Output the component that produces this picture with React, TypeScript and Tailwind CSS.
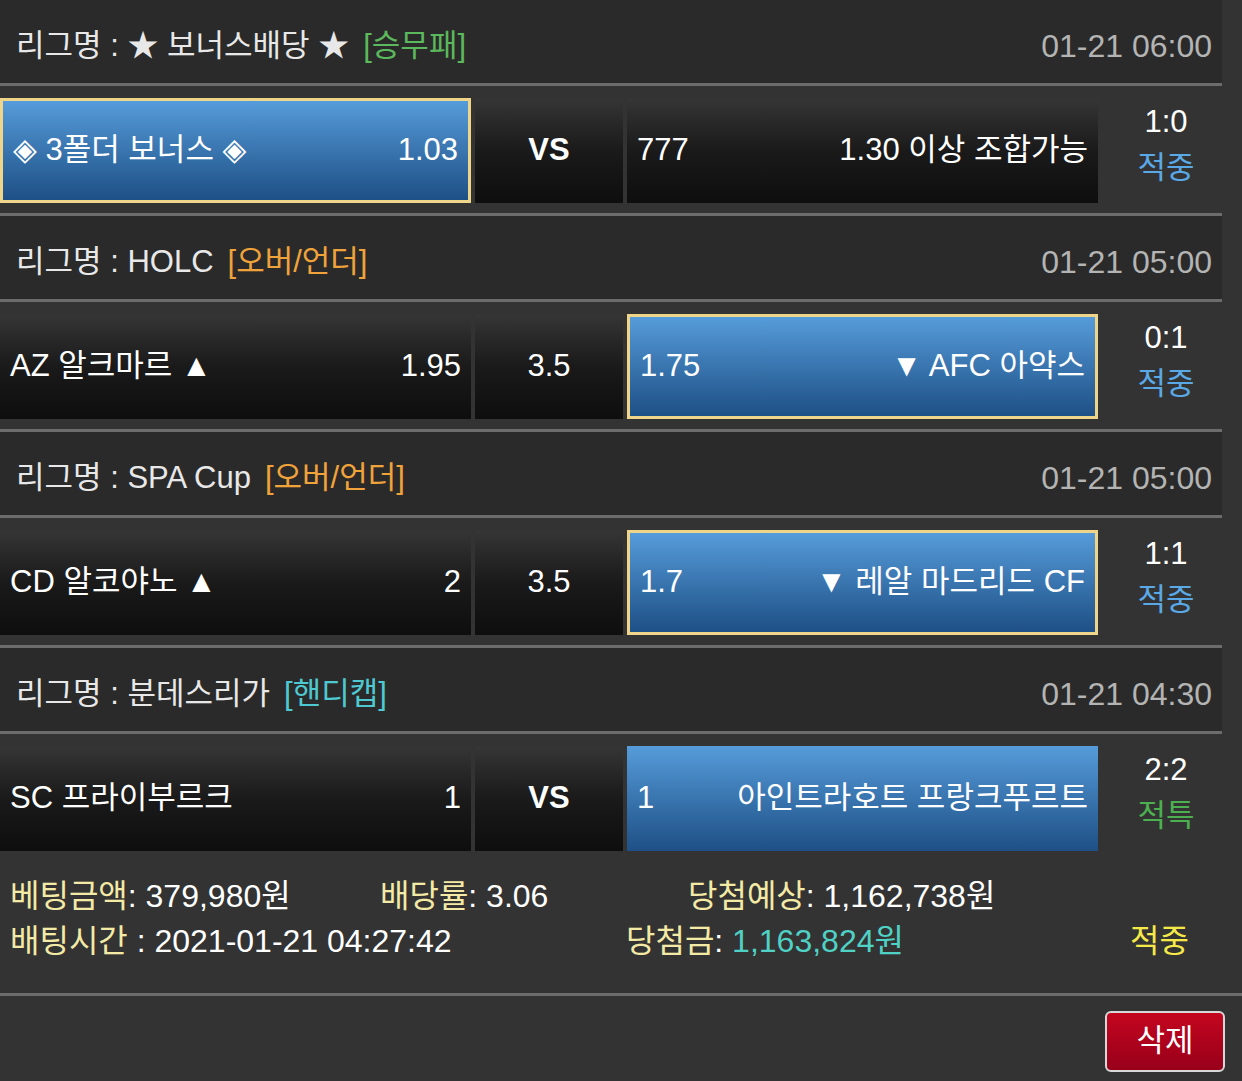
import React from "react";

type Side = "home" | "away" | null;

const bets = [
  {
    league: "★ 보너스배당 ★",
    kind: "[승무패]",
    kindColor: "text-[#5cb85c]",
    date: "01-21 06:00",
    home: "◈ 3폴더 보너스 ◈",
    homeOdds: "1.03",
    mid: "VS",
    awayOdds: "777",
    away: "1.30 이상 조합가능",
    pick: "home" as Side,
    border: true,
    score: "1:0",
    result: "적중",
    resultColor: "text-[#5aa9e6]",
  },
  {
    league: "HOLC",
    kind: "[오버/언더]",
    kindColor: "text-[#f0a33a]",
    date: "01-21 05:00",
    home: "AZ 알크마르 ▲",
    homeOdds: "1.95",
    mid: "3.5",
    awayOdds: "1.75",
    away: "▼ AFC 아약스",
    pick: "away" as Side,
    border: true,
    score: "0:1",
    result: "적중",
    resultColor: "text-[#5aa9e6]",
  },
  {
    league: "SPA Cup",
    kind: "[오버/언더]",
    kindColor: "text-[#f0a33a]",
    date: "01-21 05:00",
    home: "CD 알코야노 ▲",
    homeOdds: "2",
    mid: "3.5",
    awayOdds: "1.7",
    away: "▼ 레알 마드리드 CF",
    pick: "away" as Side,
    border: true,
    score: "1:1",
    result: "적중",
    resultColor: "text-[#5aa9e6]",
  },
  {
    league: "분데스리가",
    kind: "[핸디캡]",
    kindColor: "text-[#4ec9d2]",
    date: "01-21 04:30",
    home: "SC 프라이부르크",
    homeOdds: "1",
    mid: "VS",
    awayOdds: "1",
    away: "아인트라호트 프랑크푸르트",
    pick: "away" as Side,
    border: false,
    score: "2:2",
    result: "적특",
    resultColor: "text-[#4caf50]",
  },
];

const dark = "bg-linear-to-b from-[#363636] via-[#1a1a1a] to-[#0e0e0e]";
const blue = "bg-linear-to-b from-[#569cda] to-[#1e5086]";

function cellClass(selected: boolean, border: boolean) {
  if (!selected) return dark;
  return border ? `${blue} border-[3px] border-[#efd58a]` : blue;
}

export default function App() {
  return (
    <div
      className="min-h-screen w-[1242px] bg-[#333333] text-[31px] text-white"
      style={{ fontFamily: '"Liberation Sans", "Noto Sans CJK KR", "DejaVu Sans", sans-serif' }}
    >
      {bets.map((b, i) => (
        <div key={i} className="w-[1222px]">
          {/* league header */}
          <div className="flex h-[86px] items-center justify-between bg-[#2a2a2a] pl-[16px] pr-[10px] pt-[9px] border-b-[3px] border-[#6c6c6c]">
            <div className="flex items-center text-[#e8e8e8]">
              <span>리그명 : {b.league}</span>
              <span className={`ml-[14px] ${b.kindColor}`}>{b.kind}</span>
            </div>
            <span className="text-[32px] text-[#b4b4b4]">{b.date}</span>
          </div>

          {/* match row */}
          <div
            className={`flex gap-[4px] pt-[12px] pb-[10px] ${
              i < bets.length - 1 ? "h-[130px] border-b-[3px] border-[#6c6c6c]" : "h-[127px]"
            }`}
          >
            <div
              className={`flex w-[471px] items-center justify-between px-[10px] ${cellClass(
                b.pick === "home",
                b.border
              )}`}
            >
              <span>{b.home}</span>
              <span>{b.homeOdds}</span>
            </div>
            <div className={`flex w-[148px] items-center justify-center ${dark}`}>
              <span className={b.mid === "VS" ? "font-bold" : ""}>{b.mid}</span>
            </div>
            <div
              className={`flex w-[471px] items-center justify-between px-[10px] ${cellClass(
                b.pick === "away",
                b.border
              )}`}
            >
              <span>{b.awayOdds}</span>
              <span>{b.away}</span>
            </div>
            <div className="flex flex-1 flex-col items-center justify-center pl-[8px] pb-[12px] leading-[46px]">
              <span>{b.score}</span>
              <span className={b.resultColor}>{b.result}</span>
            </div>
          </div>
        </div>
      ))}

      {/* summary */}
      <div className="h-[135px] border-b-[3px] border-[#6c6c6c] pt-[13px] pl-[10px] text-[32px] leading-[45px]">
        <div className="flex">
          <div className="w-[370px]">
            <span className="text-[#f3eaa6]">베팅금액</span>: 379,980원
          </div>
          <div className="w-[308px]">
            <span className="text-[#f3eaa6]">배당률</span>: 3.06
          </div>
          <div>
            <span className="text-[#f3eaa6]">당첨예상</span>: 1,162,738원
          </div>
        </div>
        <div className="flex">
          <div className="w-[616px]">
            <span className="text-[#f3eaa6]">배팅시간</span> : 2021-01-21 04:27:42
          </div>
          <div className="w-[504px]">
            <span className="text-[#f3eaa6]">당첨금</span>: <span className="text-[#4fd1c5]">1,163,824원</span>
          </div>
          <div className="text-[#f5e94a]">적중</div>
        </div>
      </div>

      {/* actions */}
      <div className="flex justify-end pt-[15px] pr-[17px] pb-[9px]">
        <button
          type="button"
          className="flex h-[61px] w-[120px] items-center justify-center rounded-[6px] border-2 border-[#d8d8d8] bg-linear-to-b from-[#c4061f] to-[#98001a] text-[31px] text-white"
        >
          삭제
        </button>
      </div>
    </div>
  );
}
